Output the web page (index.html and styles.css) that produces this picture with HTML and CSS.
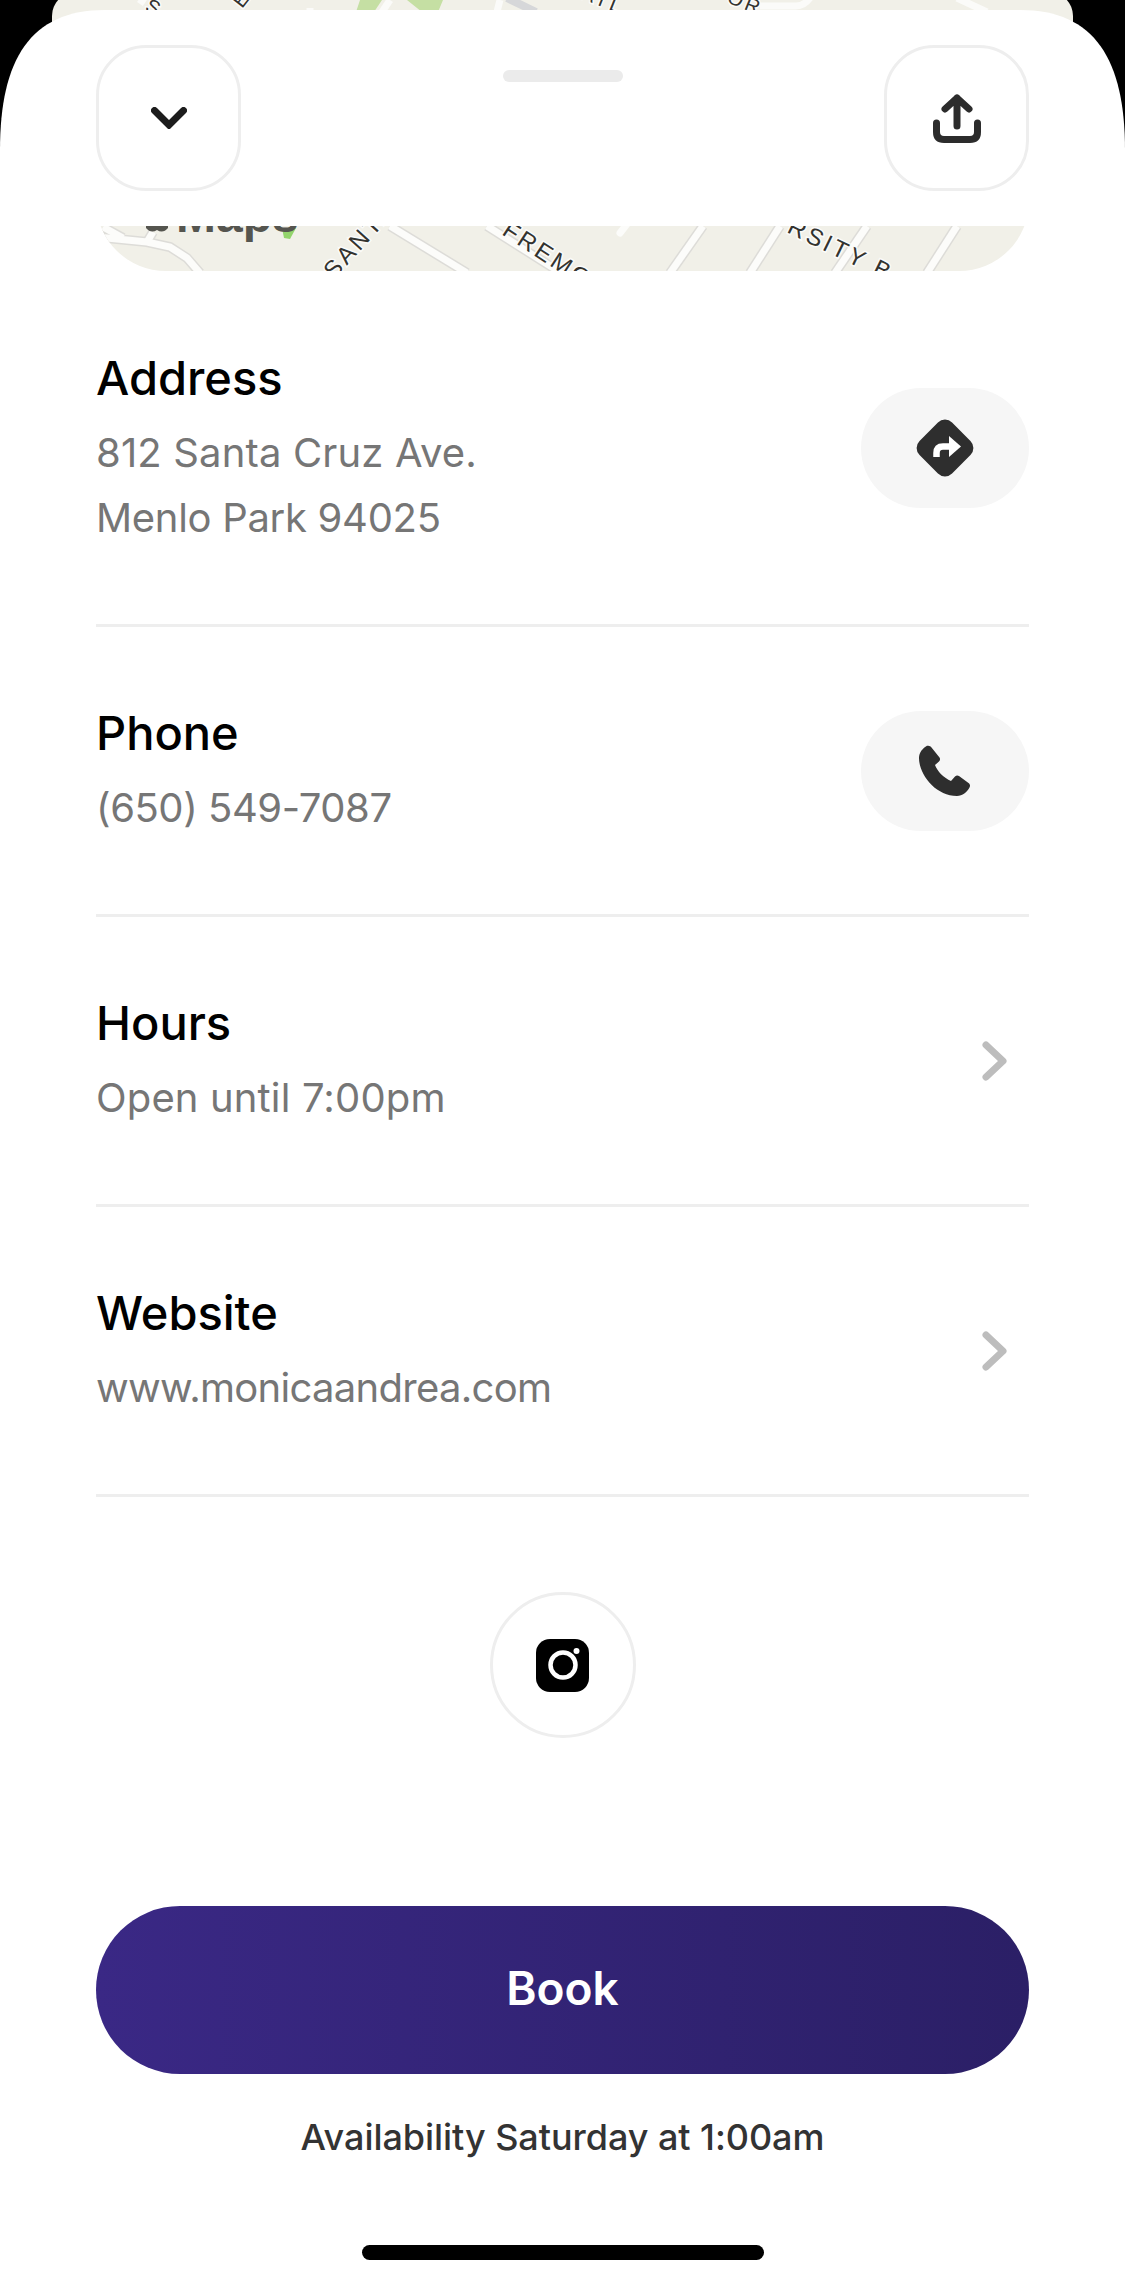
FILE: index.html
```html
<!DOCTYPE html>
<html lang="en">
<head>
<meta charset="utf-8">
<title>Location details</title>
<link rel="stylesheet" href="styles.css">
</head>
<body>
<div class="screen">
  <svg class="backmap" viewBox="0 -8 1021 48" aria-hidden="true">
    <rect class="land" y="-8" width="1021" height="48"/>
    <path class="road" d="M92 -2 L88 4"/>
    <path class="road" d="M258 10 L258 8"/>
    <path class="road" d="M338 0 L330 12"/>
    <path class="road" d="M448 0 L445 12"/>
    <path class="road" d="M708 6 H744 Q752 6 758 -2"/>
    <path class="road" d="M905 -2 L935 12"/>
    <path class="freeway" d="M455 -2 L484 12"/>
    <polygon class="park" points="308,0 330,0 322,12 304,12"/>
    <polygon class="park" points="355,0 391,0 386,12 370,12"/>
    <text class="label" transform="translate(92 10) rotate(28)">S</text>
    <text class="label" transform="translate(190 9) rotate(-52)">E</text>
    <text class="label" transform="translate(528 -2) rotate(22)">ATL</text>
    <text class="label" transform="translate(674 2) rotate(22)">OR</text>
  </svg>

  <main class="sheet">
    <header class="sheet-head">
      <span class="grabber"></span>
      <button class="square-btn" type="button" aria-label="Close">
        <svg class="icon-down" viewBox="0 0 36 22"><path d="M3.5 3.5 L18 18 L32.500 3.500"/></svg>
      </button>
      <button class="square-btn" type="button" aria-label="Share">
        <svg class="icon-share" viewBox="0 0 48 49">
          <path d="M24 4 V32 M12 15 L24 4 L36 15"/>
          <path d="M3.500 29 V38 Q3.500 45.500 11 45.500 H37 Q44.500 45.500 44.500 38 V29"/>
        </svg>
      </button>
    </header>

    <svg class="map" viewBox="0 0 933 45" aria-hidden="true">
      <rect class="land" width="933" height="45"/>
      <g class="casing">
        <path d="M7 1 L27 12"/>
        <path d="M-10 10 L11 12 L51 16 L74 21 L91 32 L104 47"/>
        <path d="M57 6 L51 16"/>
        <path d="M294 0 L371 47"/>
        <path d="M391 0 L470 50"/>
        <path d="M607 0 L574 47"/>
        <path d="M684 0 L654 47"/>
        <path d="M771 0 L739 47"/>
        <path d="M861 0 L831 47"/>
      </g>
      <g class="road-line">
        <path d="M7 1 L27 12"/>
        <path d="M-10 10 L11 12 L51 16 L74 21 L91 32 L104 47"/>
        <path d="M57 6 L51 16"/>
        <path d="M294 0 L371 47"/>
        <path d="M391 0 L470 50"/>
        <path d="M607 0 L574 47"/>
        <path d="M684 0 L654 47"/>
        <path d="M771 0 L739 47"/>
        <path d="M861 0 L831 47"/>
        <path class="road-stub" d="M531 -2 L524 7"/>
      </g>
      <polygon class="park-bright" points="186,2 200,2 194,13 188,12"/>
      <path class="maps-apple" d="M50 -8 H72 V2 Q67 8 61 4 Q55 8 50 2 Z"/>
      <text class="maps-word" x="80" y="6">Maps</text>
      <text class="label label-map" transform="translate(238 54) rotate(-48)">SANTA</text>
      <text class="label label-map" transform="translate(405 8) rotate(33)">FREMONT</text>
      <text class="label label-map" transform="translate(690 6) rotate(26)">RSITY B</text>
    </svg>

    <section class="rows">
      <div class="row">
        <div class="row-text">
          <h2 class="row-title">Address</h2>
          <p class="row-sub"><span class="open">812 Santa Cruz Ave.</span><br><span class="tight">Menlo Park 94025</span></p>
        </div>
        <button class="pill" type="button" aria-label="Directions">
          <svg class="icon-dir" viewBox="0 0 58 58">
            <rect class="dir-body" x="6" y="6" width="46" height="46" rx="10" transform="rotate(45 29 29)"/>
            <path class="dir-shaft" d="M34 27.500 H27 Q20.500 27.500 20.500 34 V38"/>
            <path class="dir-head" d="M33 17 L45 27.500 L33 38 Z"/>
          </svg>
        </button>
      </div>
      <div class="row">
        <div class="row-text">
          <h2 class="row-title">Phone</h2>
          <p class="row-sub tighter">(650) 549-7087</p>
        </div>
        <button class="pill" type="button" aria-label="Call">
          <svg class="icon-phone" viewBox="0 0 52 52">
            <path d="M8 .8 C10 .3 11.500 1 12.500 2.500 L20.500 12.500 C21.500 14 21 15.500 20 16.500 L16 20 C18 26 25 33 32 36 L36 31.500 C37 30.500 38.500 30 40 31 L49.500 38 C51 39.200 51.500 41 50.500 42.500 C48 47 43.500 51 38 51 C17 51 0 30 0 13 C0 7.500 4 3 8 .8 Z"/>
          </svg>
        </button>
      </div>
      <div class="row">
        <div class="row-text">
          <h2 class="row-title">Hours</h2>
          <p class="row-sub open">Open until 7:00pm</p>
        </div>
        <svg class="chevron" viewBox="0 0 26 40"><path d="M4 4 L21 20 L4 36"/></svg>
      </div>
      <div class="row">
        <div class="row-text">
          <h2 class="row-title">Website</h2>
          <p class="row-sub tightest">www.monicaandrea.com</p>
        </div>
        <svg class="chevron" viewBox="0 0 26 40"><path d="M4 4 L21 20 L4 36"/></svg>
      </div>
    </section>

    <div class="social">
      <a class="round-btn" href="#" aria-label="Instagram">
        <svg class="icon-ig" viewBox="0 0 53 53">
          <rect class="ig-body" width="53" height="53" rx="14"/>
          <circle class="ig-ring" cx="27" cy="26" r="12.500"/>
          <circle class="ig-dot" cx="40.500" cy="12" r="3"/>
        </svg>
      </a>
    </div>

    <div class="cta">
      <button class="book" type="button">Book</button>
      <p class="avail">Availability Saturday at 1:00am</p>
    </div>
    <div class="home-bar"></div>
  </main>
</div>
</body>
</html>
```
FILE: styles.css
```css
* { box-sizing: border-box; }
html, body { margin: 0; padding: 0; background: #000; }
body { font-family: Inter, "Liberation Sans", sans-serif; }

.screen {
  position: relative;
  width: 1125px;
  height: 2284px;
  overflow: hidden;
  background: #000;
}

.backmap {
  position: absolute;
  top: -8px;
  left: 52px;
  width: 1021px;
  height: 48px;
  border-radius: 24px 24px 0 0;
}

.land { fill: #f1f0e8; }
.road { fill: none; stroke: #fbfbf9; stroke-width: 7; }
.freeway { fill: none; stroke: #d6d7d9; stroke-width: 8; }
.park { fill: #c5dfa3; }
.park-bright { fill: #93d46c; }

.label {
  font-family: "Liberation Sans", Arial, sans-serif;
  font-size: 20px;
  letter-spacing: 3px;
  fill: #33332f;
  stroke: #fbfbf9;
  stroke-width: 3px;
  paint-order: stroke;
}
.label-map { font-size: 24px; }

.sheet {
  position: relative;
  margin-top: 10px;
  height: 2274px;
  background: #fff;
  clip-path: path("M0 140 C0 50 30 0 105 0 H1020 C1095 0 1125 50 1125 140 V2274 H0 Z");
  display: flex;
  flex-direction: column;
}

.sheet-head {
  position: relative;
  height: 216px;
  flex: none;
  padding: 35px 96px 0;
  display: flex;
  justify-content: space-between;
  align-items: flex-start;
}

.grabber {
  position: absolute;
  top: 60px;
  left: 503px;
  width: 120px;
  height: 12px;
  border-radius: 6px;
  background: #ebebeb;
}

.square-btn {
  width: 145px;
  height: 146px;
  padding: 0;
  background: #fff;
  border: 3px solid #eeeeee;
  border-radius: 50px;
  display: flex;
  align-items: center;
  justify-content: center;
}

.icon-down { width: 36px; height: 22px; fill: none; stroke: #1c1c1c; stroke-width: 7; stroke-linecap: round; }
.icon-share { width: 48px; height: 49px; fill: none; stroke: #2c2c2c; stroke-width: 7; stroke-linecap: round; stroke-linejoin: round; }

.map {
  display: block;
  flex: none;
  width: 933px;
  height: 45px;
  margin: 0 96px;
  clip-path: inset(-100px 0 0 0 round 70px);
}

.casing path { fill: none; stroke: #dddcd8; stroke-width: 10; }
.road-line path { fill: none; stroke: #fcfcfa; stroke-width: 7; }
.road-line .road-stub { stroke-linecap: round; }

.maps-apple { fill: #55554f; }
.maps-word {
  font-family: "Liberation Sans", Arial, sans-serif;
  font-size: 48px;
  font-weight: 700;
  fill: #55554f;
}

.rows {
  margin: 1px 96px 0;
  display: flex;
  flex-direction: column;
}

.row {
  display: flex;
  align-items: center;
  justify-content: space-between;
  padding: 76px 0 74px;
  border-bottom: 3px solid #eeeeee;
}

.row-title {
  margin: 0 0 12px;
  font-size: 47px;
  line-height: 60px;
  font-weight: 500;
  color: #000;
}

.row-sub {
  margin: 0;
  font-size: 40px;
  line-height: 65px;
  font-weight: 400;
  color: #767676;
}

.open { letter-spacing: 0.15px; }
.tight { letter-spacing: -0.3px; }
.tighter { letter-spacing: -0.45px; }
.tightest { letter-spacing: -0.7px; }

.pill {
  width: 168px;
  height: 120px;
  margin-bottom: 2px;
  padding: 0;
  border: none;
  border-radius: 60px;
  background: #f6f6f6;
  display: flex;
  align-items: center;
  justify-content: center;
}

.icon-dir { width: 58px; height: 58px; }
.dir-body { fill: #2e2e2e; }
.dir-shaft { fill: none; stroke: #fff; stroke-width: 6.500; }
.dir-head { fill: #fff; }

.icon-phone { width: 52px; height: 52px; fill: #2e2e2e; }

.chevron {
  width: 26px;
  height: 40px;
  margin: 0 21px 2px 0;
  fill: none;
  stroke: #bdbdbd;
  stroke-width: 7;
  stroke-linecap: round;
  stroke-linejoin: round;
}

.social {
  display: flex;
  justify-content: center;
  margin-top: 95px;
}

.round-btn {
  width: 146px;
  height: 146px;
  border: 3px solid #eeeeee;
  border-radius: 50%;
  display: flex;
  align-items: center;
  justify-content: center;
}

.icon-ig { width: 53px; height: 53px; }
.ig-body { fill: #000; }
.ig-ring { fill: none; stroke: #fff; stroke-width: 4.500; }
.ig-dot { fill: #fff; }

.cta {
  margin: 168px 96px 0;
  display: flex;
  flex-direction: column;
  align-items: center;
}

.book {
  width: 100%;
  height: 168px;
  padding: 0 0 5px;
  border: none;
  border-radius: 84px;
  background: linear-gradient(90deg, #3a2885 0%, #2b1f66 100%);
  color: #fff;
  font-family: inherit;
  font-size: 46px;
  font-weight: 600;
}

.avail {
  margin: 40px 0 0;
  font-size: 36px;
  line-height: 46px;
  font-weight: 500;
  letter-spacing: -0.06px;
  color: #333;
}

.home-bar {
  width: 402px;
  height: 15px;
  margin: 85px auto 0;
  border-radius: 8px;
  background: #000;
}
```
